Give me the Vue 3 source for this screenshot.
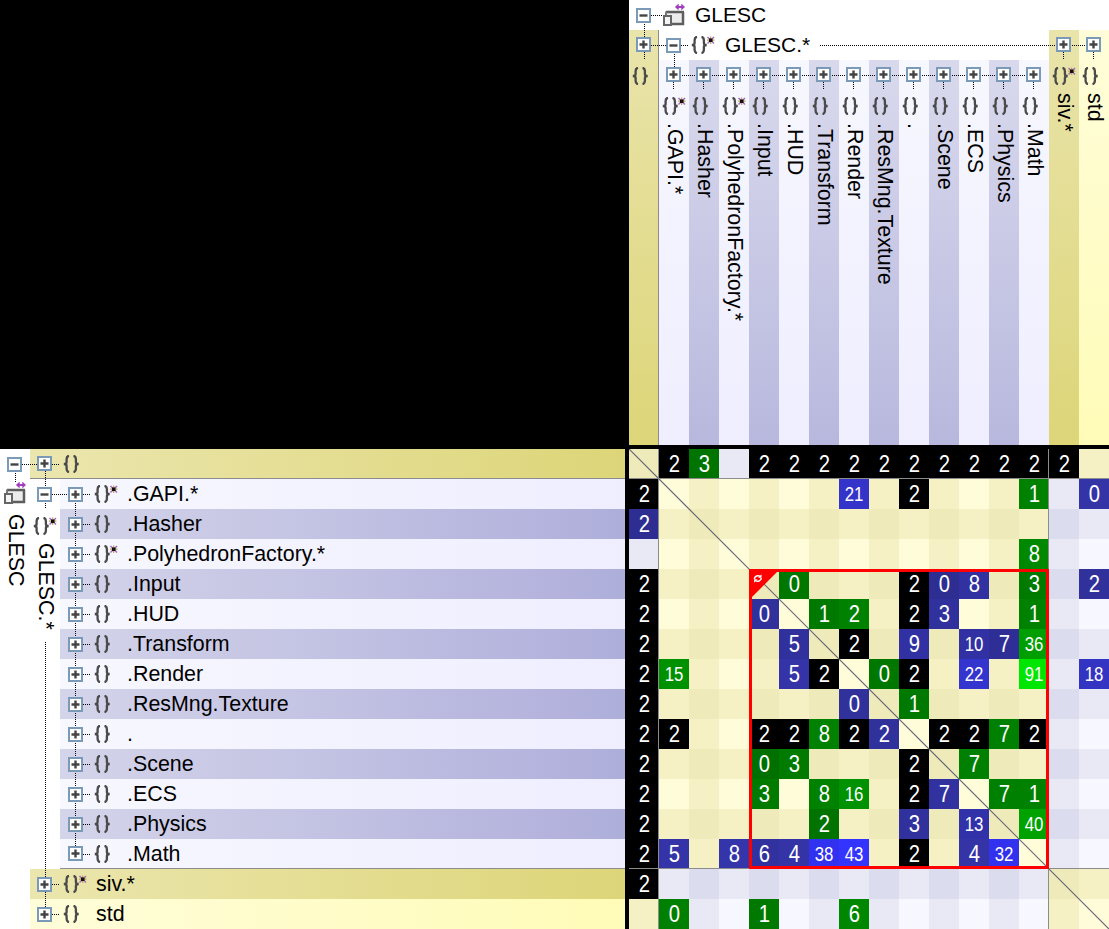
<script setup>
const nodes = [
  { name: '.GAPI.*', star: true },
  { name: '.Hasher' },
  { name: '.PolyhedronFactory.*', star: true },
  { name: '.Input' },
  { name: '.HUD' },
  { name: '.Transform' },
  { name: '.Render' },
  { name: '.ResMng.Texture' },
  { name: '.' },
  { name: '.Scene' },
  { name: '.ECS' },
  { name: '.Physics' },
  { name: '.Math' },
]

const table = [
  '.  k2 g3 .  k2 k2 k2 k2 k2 k2 k2 k2 k2 k2 k2 .',
  'k2 .  .  .  .  .  .  b21 . k2 .  .  .  g1 .  b0',
  'b2 .  .  .  .  .  .  .  .  .  .  .  .  .  .  .',
  '.  .  .  .  .  .  .  .  .  .  .  .  .  g8 .  .',
  'k2 .  .  .  .  g0 .  .  .  k2 b0 b8 .  g3 .  b2',
  'k2 .  .  .  b0 .  g1 g2 .  k2 b3 .  .  g1 .  .',
  'k2 .  .  .  .  b5 .  k2 .  b9 .  b10 b7 g36 . .',
  'k2 g15 . .  .  b5 k2 .  g0 k2 .  b22 . g91 . b18',
  'k2 .  .  .  .  .  .  b0 .  g1 .  .  .  .  .  .',
  'k2 k2 .  .  k2 k2 g8 k2 b2 .  k2 k2 g7 k2 .  .',
  'k2 .  .  .  g0 g3 .  .  .  k2 .  g7 .  .  .  .',
  'k2 .  .  .  g3 .  g8 g16 . k2 b7 .  g7 g1 .  .',
  'k2 .  .  .  .  .  g2 .  .  b3 .  b13 . g40 . .',
  'k2 b5 .  b8 b6 b4 b38 b43 . k2 . b4 b32 . .  .',
  'k2 .  .  .  .  .  .  .  .  .  .  .  .  .  .  .',
  '.  g0 .  .  g1 .  .  g6 .  .  .  .  .  .  .  .',
]

const isDark = (i) => i % 2 === 0
const inNamespace = (i) => i >= 1 && i <= 13

const emptyColor = (r, c) => {
  const darkCount = (isDark(r) ? 1 : 0) + (isDark(c) ? 1 : 0)
  const yellow = inNamespace(r) === inNamespace(c)
  const palette = yellow
    ? ['#fffcd9', '#f6f1c4', '#eeeaba']
    : ['#f7f7ff', '#e9e9f6', '#dcdcef']
  return palette[darkCount]
}

const fillColor = (kind, weight, r, c) => {
  if (kind === 'k') return '#000000'
  const darkCount = (isDark(r) ? 1 : 0) + (isDark(c) ? 1 : 0)
  const shade = [1, 0.94, 0.88][darkCount]
  if (kind === 'g') {
    const g = Math.min(235, 128 + weight * 1.12)
    return `rgb(0, ${Math.round(g * shade)}, 0)`
  }
  const b = Math.min(255, 166 + weight * weight * 0.085)
  const channel = Math.round(52 * shade)
  return `rgb(${channel}, ${channel}, ${Math.round(b * shade)})`
}

const cells = table.flatMap((line, r) =>
  line.trim().split(/\s+/).map((token, c) => {
    if (token === '.') {
      return { id: `${r}-${c}`, text: '', color: emptyColor(r, c), wide: false }
    }
    const text = token.slice(1)
    return {
      id: `${r}-${c}`,
      text,
      color: fillColor(token[0], Number(text), r, c),
      wide: text.length > 1,
    }
  }),
)

const verticalStems = nodes.map((_, i) => 45 + i * 30)
const columnStems = nodes.map((_, i) => 44 + i * 30)
</script>

<template>
  <main class="screen">
    <svg class="sprites" aria-hidden="true">
      <defs>
        <symbol id="plus" viewBox="0 0 15 15">
          <rect x="1" y="1" width="13" height="13" fill="#fff" stroke="#7b9ab8" stroke-width="2" />
          <path d="M3.500 7.500h8M7.500 3.500v8" stroke="#444" stroke-width="2.400" fill="none" />
        </symbol>
        <symbol id="minus" viewBox="0 0 15 15">
          <rect x="1" y="1" width="13" height="13" fill="#fff" stroke="#7b9ab8" stroke-width="2" />
          <path d="M3.500 7.500h8" stroke="#444" stroke-width="2.400" fill="none" />
        </symbol>
        <symbol id="braces" viewBox="0 0 24 18">
          <path
            d="M6 .8C3.200 1.300 3.600 3 3.600 5v2C3.600 8.300 2.600 9 .8 9c1.800 0 2.800.7 2.800 2v2c0 2-.4 3.700 2.400 4.200M10.500.8c2.800.5 2.400 2.200 2.400 4.200v2c0 1.300 1 2 2.800 2-1.800 0-2.800.7-2.800 2v2c0 2 .4 3.700-2.400 4.200"
            fill="none"
            stroke="#4a4a4a"
            stroke-width="2.300"
          />
        </symbol>
        <symbol id="braces-star" viewBox="0 0 24 18">
          <path
            d="M6 .8C3.200 1.300 3.600 3 3.600 5v2C3.600 8.300 2.600 9 .8 9c1.800 0 2.800.7 2.800 2v2c0 2-.4 3.700 2.400 4.200M10.500.8c2.800.5 2.400 2.200 2.400 4.200v2c0 1.300 1 2 2.800 2-1.800 0-2.800.7-2.800 2v2c0 2 .4 3.700-2.400 4.200"
            fill="none"
            stroke="#4a4a4a"
            stroke-width="2.300"
          />
          <path d="M16.500 1l6.500 6.500M23 1l-6.500 6.500" stroke="#a070b8" stroke-width="1.500" />
          <path d="M19.700 .5v7.500M16 4.200h7.500" stroke="#c8a060" stroke-width="1.200" />
          <rect x="18" y="2.500" width="3.500" height="3.500" fill="#111" />
        </symbol>
        <symbol id="assembly" viewBox="0 0 22 22">
          <path d="M13.500 3h7" stroke="#a23cc0" stroke-width="2" />
          <path d="M15.700 .5L13 3l2.700 2.500M18.300 .5L21 3l-2.700 2.500" fill="none" stroke="#a23cc0" stroke-width="1.500" />
          <rect x="3" y="7" width="18" height="14" fill="#ececec" />
          <path d="M3 8h18M20 8V20H8" fill="none" stroke="#5e5e5e" stroke-width="2.500" />
          <path d="M3 7.500v4" fill="none" stroke="#777" stroke-width="2" />
          <rect x="1" y="12" width="7" height="9" fill="#f4f4f4" stroke="#666" stroke-width="2" />
        </symbol>
      </defs>
    </svg>

    <section class="col-tree">
      <header class="col-root">
        <svg class="box"><use href="#minus" /></svg>
        <svg class="assembly"><use href="#assembly" /></svg>
        <span class="title">GLESC</span>
      </header>

      <div class="col-node col-first yellow-dark">
        <svg class="box"><use href="#plus" /></svg>
        <svg class="ns"><use href="#braces" /></svg>
      </div>

      <header class="col-group">
        <svg class="box"><use href="#minus" /></svg>
        <svg class="ns"><use href="#braces-star" /></svg>
        <span class="title">GLESC.*</span>
      </header>

      <div
        v-for="(node, i) in nodes"
        :key="node.name"
        class="col-node col-inner"
        :class="i % 2 ? 'purple-dark' : 'purple-light'"
      >
        <svg class="box"><use href="#plus" /></svg>
        <svg class="ns"><use :href="node.star ? '#braces-star' : '#braces'" /></svg>
        <span class="col-label">{{ node.name }}</span>
      </div>

      <div class="col-node col-siv yellow-dark">
        <svg class="box"><use href="#plus" /></svg>
        <svg class="ns"><use href="#braces-star" /></svg>
        <span class="col-label">siv.*</span>
      </div>
      <div class="col-node col-std yellow-light">
        <svg class="box"><use href="#plus" /></svg>
        <svg class="ns"><use href="#braces" /></svg>
        <span class="col-label">std</span>
      </div>

      <svg class="wires" width="480" height="445">
        <path
          d="M22 15.500H34M15.500 22V37M22 45.500H37M15.500 52V60M52 45.500H60M45.500 52V67M45 75.500H405M191 45.500H464M434.500 52V60M464.500 52V60"
        />
        <path v-for="x in columnStems" :key="x" :d="`M${x + 0.5} 82V90`" />
      </svg>
    </section>

    <section class="row-tree">
      <aside class="row-strip">
        <svg class="box"><use href="#minus" /></svg>
        <svg class="assembly-side"><use href="#assembly" /></svg>
        <span class="col-label strip-label">GLESC</span>
      </aside>

      <div class="row-node row-first yellow-dark-h">
        <svg class="box"><use href="#plus" /></svg>
        <svg class="ns"><use href="#braces" /></svg>
      </div>

      <aside class="row-strip row-strip-ns">
        <svg class="box"><use href="#minus" /></svg>
        <svg class="ns-side"><use href="#braces-star" /></svg>
        <span class="col-label strip-label strip-label-ns">GLESC.*</span>
      </aside>

      <div
        v-for="(node, i) in nodes"
        :key="node.name"
        class="row-node row-inner"
        :class="[i % 2 ? 'purple-dark-h' : 'purple-light-h', { 'row-last': i === nodes.length - 1 }]"
      >
        <svg class="box"><use href="#plus" /></svg>
        <svg class="ns"><use :href="node.star ? '#braces-star' : '#braces'" /></svg>
        <span class="row-label">{{ node.name }}</span>
      </div>

      <div class="row-node row-siv yellow-dark-h">
        <svg class="box"><use href="#plus" /></svg>
        <svg class="ns"><use href="#braces-star" /></svg>
        <span class="row-label">siv.*</span>
      </div>
      <div class="row-node row-std yellow-light-h">
        <svg class="box"><use href="#plus" /></svg>
        <svg class="ns"><use href="#braces" /></svg>
        <span class="row-label">std</span>
      </div>

      <svg class="wires" width="625" height="480">
        <path
          d="M22 15.500H37M15.500 22V33M52 15.500H60M45.500 22V38M52 45.500H67M45.500 52V60M45.500 193V458M52 435.500H60M52 465.500H60M75.500 52V405"
        />
        <path v-for="y in verticalStems" :key="y" :d="`M83 ${y + 0.5}H91`" />
      </svg>
    </section>

    <section class="matrix">
      <div
        v-for="cell in cells"
        :key="cell.id"
        class="cell"
        :class="{ wide: cell.wide }"
        :style="{ background: cell.color }"
      ><span v-if="cell.text" class="num">{{ cell.text }}</span></div>

      <svg class="rules" width="480" height="480">
        <line class="diagonal" x1="0" y1="0" x2="480" y2="480" />
        <path class="edges" d="M29.500 0V480M419.500 0V480M0 29.500H480M0 419.500H480" />
      </svg>

      <div class="cycle">
        <svg class="cycle-flag" width="30" height="30" viewBox="0 0 30 30">
          <path d="M0 0H25L0 25Z" fill="#ff0000" />
          <path d="M2.300 7a3.700 3.700 0 0 1 6-2.500M9.300 6a3.700 3.700 0 0 1-6 2.500" fill="none" stroke="#fff" stroke-width="1.500" />
          <path d="M9.500 2.300v3.500H6.100zM2.100 10.700V7.200H5.500z" fill="#fff" />
        </svg>
      </div>
    </section>
  </main>
</template>

<style scoped>
.screen {
  position: relative;
  display: grid;
  grid-template-columns: 625px 480px;
  grid-template-rows: 445px 480px;
  gap: 4px;
  width: 1109px;
  height: 929px;
  background: #000;
  font-family: "Liberation Sans", Arial, sans-serif;
  color: #000;
  overflow: hidden;
}

.sprites {
  position: absolute;
  width: 0;
  height: 0;
}

.box {
  position: relative;
  z-index: 2;
  flex: none;
  width: 15px;
  height: 15px;
}

.ns {
  flex: none;
  width: 24px;
  height: 18px;
}

.title {
  font-size: 21px;
  line-height: 30px;
  white-space: nowrap;
}

/* Column tree */
.col-tree {
  position: relative;
  grid-column: 2;
  grid-row: 1;
  display: grid;
  grid-template-columns: repeat(16, 30px);
  grid-template-rows: 30px 30px 385px;
  background: #fff;
}

.col-root {
  grid-column: 1 / -1;
  grid-row: 1;
  display: flex;
  align-items: center;
  padding-left: 7px;
}

.assembly {
  width: 22px;
  height: 22px;
  margin-left: 12px;
}

.col-root .title {
  margin-left: 10px;
}

.col-group {
  grid-column: 2 / 15;
  grid-row: 2;
  display: flex;
  align-items: center;
  padding-left: 7px;
}

.col-group .ns {
  margin-left: 10px;
}

.col-group .title {
  margin-left: 10px;
}

.col-node {
  display: flex;
  flex-direction: column;
  align-items: flex-start;
  padding-top: 7px;
  box-sizing: border-box;
}

.col-node .box {
  margin-left: 7px;
}

.col-node .ns {
  margin: 15px 0 0 3px;
}

.col-first {
  grid-column: 1;
  grid-row: 2 / 4;
  border-right: 1px solid #8c8c8c;
}

.col-inner {
  grid-row: 3;
}

.col-inner:last-of-type {
  border-right: 1px solid #8c8c8c;
}

.col-siv {
  grid-column: 15;
  grid-row: 2 / 4;
}

.col-std {
  grid-column: 16;
  grid-row: 2 / 4;
}

.col-label {
  writing-mode: vertical-rl;
  margin: 8px 0 0 1px;
  width: 30px;
  font-size: 21.400px;
  line-height: 30px;
  white-space: nowrap;
}

.yellow-dark {
  background: linear-gradient(to bottom, #e9e4ab, #ddd578);
}

.yellow-light {
  background: linear-gradient(to bottom, #fffdd9, #fffcb8);
}

.purple-dark {
  background: linear-gradient(to bottom, #d9d9ed, #b8b8de);
}

.purple-light {
  background: linear-gradient(to bottom, #f7f7ff, #eeeeff);
}

/* Row tree */
.row-tree {
  position: relative;
  grid-column: 1;
  grid-row: 2;
  display: grid;
  grid-template-columns: 30px 30px 565px;
  grid-template-rows: repeat(16, 30px);
  background: #fff;
}

.row-strip {
  grid-column: 1;
  grid-row: 1 / -1;
  display: flex;
  flex-direction: column;
  align-items: flex-start;
  padding-top: 8px;
  box-sizing: border-box;
}

.row-strip .box {
  margin-left: 7px;
}

.row-strip-ns {
  grid-column: 2;
  grid-row: 2 / 15;
}

.assembly-side {
  width: 22px;
  height: 22px;
  margin: 10px 0 0 4px;
}

.ns-side {
  width: 24px;
  height: 18px;
  margin: 15px 0 0 3px;
}

.strip-label {
  margin-top: 10px;
}

.strip-label-ns {
  margin-top: 8px;
}

.row-node {
  display: flex;
  align-items: center;
  padding-left: 7px;
  box-sizing: border-box;
  min-width: 0;
}

.row-node .ns {
  margin-left: 11px;
}

.row-first {
  grid-column: 2 / 4;
  grid-row: 1;
  border-bottom: 1px solid #8c8c8c;
}

.row-inner {
  grid-column: 3;
  padding-left: 8px;
}

.row-last {
  border-bottom: 1px solid #8c8c8c;
}

.row-siv {
  grid-column: 2 / 4;
  grid-row: 15;
}

.row-std {
  grid-column: 2 / 4;
  grid-row: 16;
}

.row-label {
  margin-left: 9px;
  font-size: 21.400px;
  line-height: 30px;
  white-space: nowrap;
}

.yellow-dark-h {
  background: linear-gradient(to right, #ebe6ae, #ddd578);
}

.yellow-light-h {
  background: linear-gradient(to right, #fffdd9, #fffcb8);
}

.purple-dark-h {
  background: linear-gradient(to right, #d4d4ea, #aeaedb);
}

.purple-light-h {
  background: linear-gradient(to right, #f7f7ff, #eeeeff);
}

.wires {
  position: absolute;
  inset: 0;
  z-index: 1;
  pointer-events: none;
}

.wires path {
  fill: none;
  stroke: #000;
  stroke-width: 1;
  stroke-dasharray: 1 1;
  shape-rendering: crispEdges;
}

/* Matrix */
.matrix {
  position: relative;
  grid-column: 2;
  grid-row: 2;
  display: grid;
  grid-template-columns: repeat(16, 30px);
  grid-template-rows: repeat(16, 30px);
}

.cell {
  display: flex;
  align-items: center;
  justify-content: center;
  color: #fff;
  font-size: 23px;
  line-height: 1;
}

.cell.wide {
  font-size: 20px;
}

.num {
  display: inline-block;
  transform: scaleX(0.88);
}

.wide .num {
  transform: scaleX(0.84);
}

.rules {
  position: absolute;
  inset: 0;
  pointer-events: none;
}

.diagonal {
  stroke: #66667a;
  stroke-width: 1.200;
}

.edges {
  fill: none;
  stroke: #8c8c8c;
  stroke-width: 1;
  shape-rendering: crispEdges;
}

.cycle {
  position: absolute;
  inset: 0;
  grid-column: 5 / 15;
  grid-row: 5 / 15;
  border: 3px solid #ff0000;
  box-sizing: border-box;
  pointer-events: none;
}

.cycle-flag {
  display: block;
}
</style>
